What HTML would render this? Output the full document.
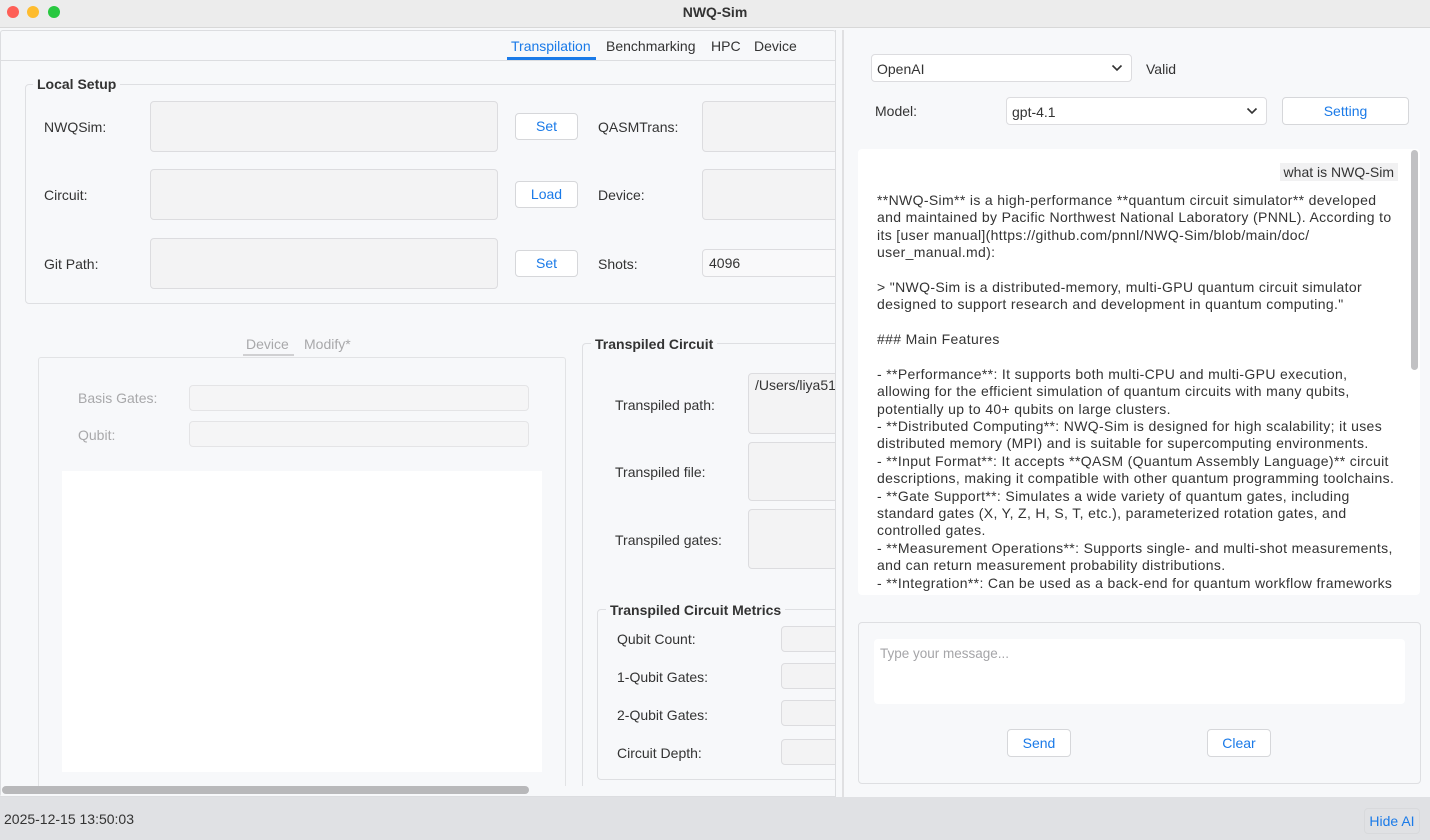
<!DOCTYPE html>
<html><head><meta charset="utf-8"><style>
*{box-sizing:border-box;margin:0;padding:0}
body{width:1430px;height:840px;overflow:hidden;background:#f7f8fa;font-family:"Liberation Sans",sans-serif;font-size:13.5px;color:#333;position:relative}
.a{position:absolute;white-space:nowrap}
.in{position:absolute;background:#f3f3f4;border:1px solid #dcdcdf;border-radius:4px}
.btn{position:absolute;background:#fff;border:1px solid #d6d7da;border-radius:4px;color:#1a7ae8;text-align:center;font-size:14px}
.lbl{position:absolute;font-size:14px;color:#333;white-space:nowrap}
.grp{position:absolute;border:1px solid #dedfe2;border-radius:4px}
.gt{position:absolute;background:#f7f8fa;font-weight:bold;font-size:14px;color:#333;padding:0 4px;white-space:nowrap}
.chat div{height:17.4px;white-space:nowrap}
</style></head><body>
<div class="a" style="left:0;top:0;width:1430px;height:28px;background:#ececec;border-bottom:1px solid #d8d8d8"></div>
<div class="a" style="left:7px;top:6px;width:12px;height:12px;border-radius:6px;background:#fe5f57"></div>
<div class="a" style="left:27px;top:6px;width:12px;height:12px;border-radius:6px;background:#febc2e"></div>
<div class="a" style="left:48px;top:6px;width:12px;height:12px;border-radius:6px;background:#28c840"></div>
<div class="a" style="left:0;top:4px;width:1430px;text-align:center;font-weight:bold;font-size:14px;color:#333">NWQ-Sim</div>

<!-- left panel -->
<div class="a" style="left:0;top:30px;width:836px;height:767px;overflow:hidden">
<div class="a" style="left:0;top:0;width:836px;height:767px;border:1px solid #dcdde0;border-radius:3px"></div>
<div class="a" style="left:1px;top:30px;width:835px;height:1px;background:#dcdde0"></div>
<div class="a" style="left:511px;top:8px;color:#1a7ae8;font-size:14px">Transpilation</div>
<div class="a" style="left:507px;top:27px;width:89px;height:3px;background:#1a7ae8"></div>
<div class="a" style="left:606px;top:8px;font-size:14px">Benchmarking</div>
<div class="a" style="left:711px;top:8px;font-size:14px">HPC</div>
<div class="a" style="left:754px;top:8px;font-size:14px">Device</div>
<div style="position:absolute;left:0;top:-30px;width:900px;height:840px">
<div class="grp" style="left:25px;top:84px;width:822px;height:220px"></div>
<div class="gt" style="left:33px;top:76px">Local Setup</div>
<div class="lbl" style="left:44px;top:119px">NWQSim:</div>
<div class="in" style="left:150px;top:101px;width:348px;height:51px"></div>
<div class="btn" style="left:515px;top:113px;width:63px;height:27px;line-height:25px">Set</div>
<div class="lbl" style="left:598px;top:119px">QASMTrans:</div>
<div class="in" style="left:702px;top:101px;width:160px;height:51px"></div>
<div class="lbl" style="left:44px;top:187px">Circuit:</div>
<div class="in" style="left:150px;top:169px;width:348px;height:51px"></div>
<div class="btn" style="left:515px;top:181px;width:63px;height:27px;line-height:25px">Load</div>
<div class="lbl" style="left:598px;top:187px">Device:</div>
<div class="in" style="left:702px;top:169px;width:160px;height:51px"></div>
<div class="lbl" style="left:44px;top:256px">Git Path:</div>
<div class="in" style="left:150px;top:238px;width:348px;height:51px"></div>
<div class="btn" style="left:515px;top:250px;width:63px;height:27px;line-height:25px">Set</div>
<div class="lbl" style="left:598px;top:256px">Shots:</div>
<div class="in" style="left:702px;top:249px;width:160px;height:28px;background:#f9f9fa;padding:5px 6px;font-size:14px">4096</div>

<div class="a" style="left:246px;top:336px;color:#a8a8aa;font-size:14px">Device</div>
<div class="a" style="left:243px;top:354px;width:51px;height:2px;background:#d0d0d2"></div>
<div class="a" style="left:304px;top:336px;color:#a8a8aa;font-size:14px">Modify*</div>
<div class="a" style="left:38px;top:357px;width:528px;height:440px;border:1px solid #e2e3e5;border-bottom:none;border-radius:3px"></div>
<div class="lbl" style="left:78px;top:390px;color:#a8a8aa">Basis Gates:</div>
<div class="in" style="left:189px;top:385px;width:340px;height:26px;background:#f5f5f6;border-color:#e4e4e6"></div>
<div class="lbl" style="left:78px;top:427px;color:#a8a8aa">Qubit:</div>
<div class="in" style="left:189px;top:421px;width:340px;height:26px;background:#f5f5f6;border-color:#e4e4e6"></div>
<div class="a" style="left:62px;top:471px;width:480px;height:301px;background:#fff"></div>

<div class="grp" style="left:582px;top:343px;width:280px;height:460px;border-bottom:none"></div>
<div class="gt" style="left:591px;top:336px">Transpiled Circuit</div>
<div class="lbl" style="left:615px;top:397px">Transpiled path:</div>
<div class="in" style="left:748px;top:373px;width:114px;height:61px;padding:3px 6px;font-size:14px;overflow:hidden;white-space:nowrap">/Users/liya51</div>
<div class="lbl" style="left:615px;top:464px">Transpiled file:</div>
<div class="in" style="left:748px;top:442px;width:114px;height:59px"></div>
<div class="lbl" style="left:615px;top:532px">Transpiled gates:</div>
<div class="in" style="left:748px;top:509px;width:114px;height:60px"></div>
<div class="grp" style="left:597px;top:609px;width:265px;height:171px"></div>
<div class="gt" style="left:606px;top:602px">Transpiled Circuit Metrics</div>
<div class="lbl" style="left:617px;top:631px">Qubit Count:</div>
<div class="in" style="left:781px;top:626px;width:80px;height:26px"></div>
<div class="lbl" style="left:617px;top:669px">1-Qubit Gates:</div>
<div class="in" style="left:781px;top:663px;width:80px;height:26px"></div>
<div class="lbl" style="left:617px;top:707px">2-Qubit Gates:</div>
<div class="in" style="left:781px;top:700px;width:80px;height:26px"></div>
<div class="lbl" style="left:617px;top:745px">Circuit Depth:</div>
<div class="in" style="left:781px;top:739px;width:80px;height:26px"></div>
<div class="a" style="left:1px;top:786px;width:834px;height:10px;background:#f7f8fa"></div>
<div class="a" style="left:2px;top:786px;width:527px;height:8px;border-radius:4px;background:#b8b8ba"></div>
</div>
<div class="a" style="left:835px;top:0;width:1px;height:767px;background:#dcdde0"></div>
<div class="a" style="left:0;top:766px;width:836px;height:1px;background:#dcdde0"></div>
</div>
<div class="a" style="left:842px;top:30px;width:2px;height:767px;background:#e0e0e2"></div>

<!-- right panel -->
<div class="in" style="left:871px;top:54px;width:261px;height:28px;background:#fff;padding:6px 5px;font-size:14px">OpenAI<svg style="position:absolute;right:8px;top:8px" width="12" height="10" viewBox="0 0 12 10"><path d="M1.5 2.5 L6 7 L10.5 2.5" fill="none" stroke="#333" stroke-width="1.6"/></svg></div>
<div class="lbl" style="left:1146px;top:61px">Valid</div>
<div class="lbl" style="left:875px;top:103px">Model:</div>
<div class="in" style="left:1006px;top:97px;width:261px;height:28px;background:#fff;padding:6px 5px;font-size:14px">gpt-4.1<svg style="position:absolute;right:8px;top:8px" width="12" height="10" viewBox="0 0 12 10"><path d="M1.5 2.5 L6 7 L10.5 2.5" fill="none" stroke="#333" stroke-width="1.6"/></svg></div>
<div class="btn" style="left:1282px;top:97px;width:127px;height:28px;line-height:26px">Setting</div>

<div class="a" style="left:858px;top:149px;width:562px;height:446px;background:#fff;border-radius:4px;overflow:hidden">
<div class="a" style="right:22px;top:14px;background:#f1f1f2;padding:1px 4px;font-size:14px;color:#333">what is NWQ-Sim</div>
<div class="a" style="left:553px;top:1px;width:7px;height:220px;background:#c1c1c3;border-radius:4px"></div>
<div class="a chat" style="left:19px;top:43px;font-size:14px;letter-spacing:0.35px;line-height:17.4px;color:#333">
<div>**NWQ-Sim** is a high-performance **quantum circuit simulator** developed</div>
<div>and maintained by Pacific Northwest National Laboratory (PNNL). According to</div>
<div>its [user manual](https://github.com/pnnl/NWQ-Sim/blob/main/doc/</div>
<div>user_manual.md):</div>
<div></div>
<div>&gt; "NWQ-Sim is a distributed-memory, multi-GPU quantum circuit simulator</div>
<div>designed to support research and development in quantum computing."</div>
<div></div>
<div>### Main Features</div>
<div></div>
<div>- **Performance**: It supports both multi-CPU and multi-GPU execution,</div>
<div>allowing for the efficient simulation of quantum circuits with many qubits,</div>
<div>potentially up to 40+ qubits on large clusters.</div>
<div>- **Distributed Computing**: NWQ-Sim is designed for high scalability; it uses</div>
<div>distributed memory (MPI) and is suitable for supercomputing environments.</div>
<div>- **Input Format**: It accepts **QASM (Quantum Assembly Language)** circuit</div>
<div>descriptions, making it compatible with other quantum programming toolchains.</div>
<div>- **Gate Support**: Simulates a wide variety of quantum gates, including</div>
<div>standard gates (X, Y, Z, H, S, T, etc.), parameterized rotation gates, and</div>
<div>controlled gates.</div>
<div>- **Measurement Operations**: Supports single- and multi-shot measurements,</div>
<div>and can return measurement probability distributions.</div>
<div>- **Integration**: Can be used as a back-end for quantum workflow frameworks</div>
<div>or testing quantum algorithms at scales not possible on current quantum</div>
</div>
</div>

<div class="grp" style="left:858px;top:622px;width:563px;height:162px"></div>
<div class="a" style="left:874px;top:639px;width:531px;height:65px;background:#fff;border-radius:4px;padding:7px 6px;color:#a5a5a8;font-size:13.5px">Type your message...</div>
<div class="btn" style="left:1007px;top:729px;width:64px;height:28px;line-height:26px">Send</div>
<div class="btn" style="left:1207px;top:729px;width:64px;height:28px;line-height:26px">Clear</div>

<div class="a" style="left:0;top:797px;width:1430px;height:43px;background:#e0e1e4"></div>
<div class="a" style="left:4px;top:811px;font-size:14px;color:#333">2025-12-15 13:50:03</div>
<div class="a" style="left:1364px;top:808px;width:56px;height:26px;border:1px solid #d8d9dc;border-radius:4px;color:#1a7ae8;font-size:14px;text-align:center;line-height:24px">Hide AI</div>
</body></html>
